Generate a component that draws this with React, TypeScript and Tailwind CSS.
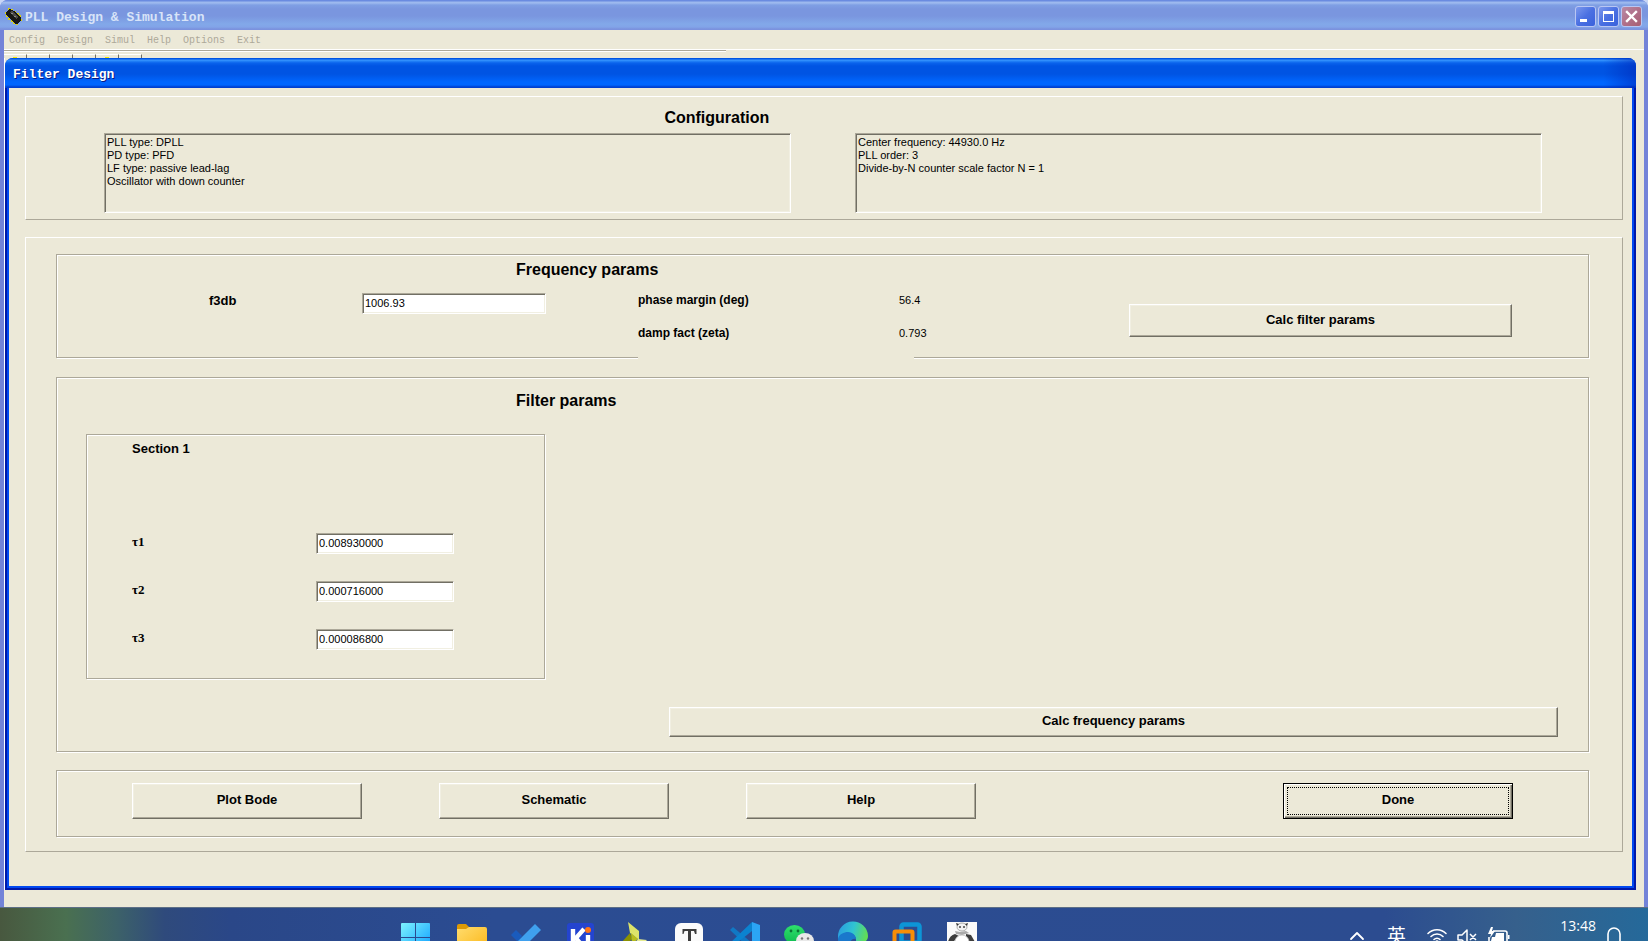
import type { ReactNode } from "react";

const sans = "font-['Liberation_Sans',Arial,sans-serif]";
const mono = "font-['Liberation_Mono','Courier_New',monospace]";

const raisedPanel =
  "border border-t-white border-l-white border-r-[#aca899] border-b-[#aca899]";
const etched =
  "border border-[#aca899] p-px shadow-[1px_1px_0_#fff,inset_1px_1px_0_#fff]";
const sunken =
  "border border-t-[#aca899] border-l-[#aca899] border-r-white border-b-white shadow-[inset_1px_1px_0_#716f64,inset_-1px_-1px_0_#f1efe2]";

function PushButton({ children, className = "" }: { children: ReactNode; className?: string }) {
  return (
    <button
      type="button"
      className={`border border-t-white border-l-white border-r-[#716f64] border-b-[#716f64] bg-[#ece9d8] pb-0.5 text-[13px] leading-5 font-bold shadow-[inset_-1px_-1px_0_#aca899,inset_1px_1px_0_#f1efe2] ${className}`}
    >
      {children}
    </button>
  );
}

function ListBox({ lines, className = "" }: { lines: string[]; className?: string }) {
  return (
    <ul className={`h-20 px-0.5 pt-0.5 text-[11px] leading-[13px] ${sunken} ${className}`}>
      {lines.map((line) => (
        <li key={line}>{line}</li>
      ))}
    </ul>
  );
}

function TextField({ id, value, className = "" }: { id: string; value: string; className?: string }) {
  return (
    <input
      id={id}
      type="text"
      defaultValue={value}
      className={`h-[21px] w-full min-w-0 rounded-none bg-white px-0.5 pb-0.5 text-[11px] leading-4 outline-none ${sunken} ${className}`}
    />
  );
}

function ChipIcon() {
  return (
    <svg width="18" height="18" viewBox="0 0 18 18" shapeRendering="crispEdges" aria-hidden="true">
      <path
        d="M3 0h2v2H3zM6 1h2v2H6zM0 4h2v2H0zM9 3h2v2H9zM12 5h2v2h-2zM14 7h2v2h-2zM1 7h2v2H1zM3 10h2v2H3zM6 12h2v2H6zM8 14h2v2H8zM11 15h2v2h-2zM15 11h2v2h-2z"
        fill="#d8d010"
      />
      <path d="M2 3 5 1l4 2 7 6v3l-4 4h-2L1 7V4z" fill="#161616" />
      <path d="M4 4l3-1 7 6-3 2z" fill="#484848" />
      <path d="M6 5h2v1H6zM9 8h2v1H9z" fill="#8a8a8a" />
    </svg>
  );
}

const captionBase =
  "flex h-[21px] w-[21px] items-center justify-center rounded-[3px] border border-[#b9c6f3]";

function CaptionButtons() {
  return (
    <div className="flex gap-0.5">
      <button type="button" aria-label="Minimize" className={`${captionBase} bg-linear-to-br from-[#7d98ec] via-[#4a70e2] to-[#3a62dc]`}>
        <svg width="19" height="19" viewBox="0 0 19 19" aria-hidden="true">
          <path d="M4 12h7v3H4z" fill="#fff" />
        </svg>
      </button>
      <button type="button" aria-label="Maximize" className={`${captionBase} bg-linear-to-br from-[#7d98ec] via-[#4a70e2] to-[#3a62dc]`}>
        <svg width="19" height="19" viewBox="0 0 19 19" aria-hidden="true">
          <path fillRule="evenodd" d="M4 4h11v11H4zM5 7v7h9V7z" fill="#fff" />
        </svg>
      </button>
      <button type="button" aria-label="Close" className={`${captionBase} bg-linear-to-br from-[#b98aa6] via-[#b0708a] to-[#a85f72]`}>
        <svg width="19" height="19" viewBox="0 0 19 19" aria-hidden="true">
          <path d="M5 5l9 9M14 5l-9 9" stroke="#fff" strokeWidth="2.4" strokeLinecap="square" />
        </svg>
      </button>
    </div>
  );
}

function TaskIcon({ name, children }: { name: string; children: ReactNode }) {
  return (
    <button type="button" aria-label={name} className="h-8 w-8 shrink-0">
      <svg width="32" height="32" viewBox="0 0 32 32" aria-hidden="true">
        {children}
      </svg>
    </button>
  );
}

function TaskbarApps() {
  return (
    <div className="flex w-[578px] justify-between">
      <TaskIcon name="Start">
        <defs>
          <linearGradient id="win" x1="0" y1="0" x2="1" y2="1">
            <stop offset="0" stopColor="#7df3ff" />
            <stop offset="1" stopColor="#0a9bff" />
          </linearGradient>
        </defs>
        <path d="M2 2h13v14H1V3a1 1 0 0 1 1-1zM16 2h13a1 1 0 0 1 1 1v13H16zM1 17h14v14H1zM16 17h14v14H16z" fill="url(#win)" />
      </TaskIcon>
      <TaskIcon name="File Explorer">
        <defs>
          <linearGradient id="fold" x1="0" y1="0" x2="1" y2="1">
            <stop offset="0" stopColor="#ffdc6e" />
            <stop offset="1" stopColor="#fbb616" />
          </linearGradient>
        </defs>
        <path d="M2 5a2 2 0 0 1 2-2h7l3 3v4H2z" fill="#dd9a04" />
        <path d="M2 8h9l3-2h16a2 2 0 0 1 2 2v22H2z" fill="url(#fold)" />
      </TaskIcon>
      <TaskIcon name="To Do">
        <path d="M7 9 13 15 9 21 2 14z" fill="#1a5bbd" />
        <path d="M26 3l6 6L14 27l-6-6z" fill="#3fa0ee" />
      </TaskIcon>
      <TaskIcon name="KiCad">
        <rect x="3" y="2" width="27" height="28" rx="3" fill="#2444cf" />
        <path d="M9 8v20M20 8 12 17l8 10" stroke="#fff" strokeWidth="4.4" fill="none" />
        <path d="M24 14v15" stroke="#fff" strokeWidth="4.4" />
        <circle cx="24" cy="9" r="3" fill="#ff7415" />
      </TaskIcon>
      <TaskIcon name="Design tool">
        <path d="M10 1l11 9v9l-9-7z" fill="#dce36a" />
        <path d="M12 12l2 6-4 4H3z" fill="#8c9200" />
        <path d="M13 12l7 6-6 5z" fill="#b7bd1e" />
        <path d="M20 18l9 1-7 7-6-3z" fill="#e5eb90" />
      </TaskIcon>
      <TaskIcon name="Typora">
        <rect x="2" y="2" width="28" height="29" rx="6" fill="#fbfbfb" />
        <path d="M9.500 8h14v5h-1.500l-1-3H18v16h-3V10h-3.500l-1 3H9.500z" fill="#3d3d3d" />
      </TaskIcon>
      <TaskIcon name="Visual Studio Code">
        <path d="M2 9l3-3 19 16v8z" fill="#1178c4" />
        <path d="M24 1v9L5 25l-3-3z" fill="#0b83d0" />
        <path d="M24 1l8 3v24l-8 3z" fill="#2ba5f5" />
      </TaskIcon>
      <TaskIcon name="WeChat">
        <defs>
          <linearGradient id="wc" x1="0" y1="0" x2="0" y2="1">
            <stop offset="0" stopColor="#2ee06c" />
            <stop offset="1" stopColor="#10bb50" />
          </linearGradient>
        </defs>
        <ellipse cx="12.500" cy="13.500" rx="10.500" ry="9.500" fill="url(#wc)" />
        <circle cx="9" cy="10" r="1.400" fill="#0b7335" />
        <circle cx="16" cy="10" r="1.400" fill="#0b7335" />
        <ellipse cx="23" cy="20" rx="9" ry="8" fill="#e8e8e8" />
        <circle cx="20" cy="17.500" r="1.200" fill="#777" />
        <circle cx="26" cy="17.500" r="1.200" fill="#777" />
      </TaskIcon>
      <TaskIcon name="Edge">
        <defs>
          <linearGradient id="edge" x1="0" y1="0.300" x2="1" y2="0.500">
            <stop offset="0" stopColor="#2a9de0" />
            <stop offset="0.500" stopColor="#30c4d2" />
            <stop offset="1" stopColor="#62df52" />
          </linearGradient>
        </defs>
        <path d="M1 16A15 15 0 0 1 31 15c0 5-4 7-8 7-3 0-4-1-4-3 0-4-3-7-7-7-5 0-9 3-11 7z" fill="url(#edge)" />
        <path d="M1 18c1-5 6-7 10-7 5 0 8 4 8 7-5-1-7 4-6 8v5C6 30 1 25 1 18z" fill="#1a78cc" />
      </TaskIcon>
      <TaskIcon name="VMware">
        <rect x="10.500" y="3.500" width="18" height="18" rx="2" fill="none" stroke="#0d95d6" strokeWidth="4.500" />
        <rect x="3.500" y="10.500" width="18" height="18" rx="1" fill="none" stroke="#f78d06" strokeWidth="4" />
      </TaskIcon>
      <TaskIcon name="PLL Design">
        <path d="M1 1h30v31H1z" fill="#fafafa" />
        <ellipse cx="16" cy="6" rx="5" ry="4" fill="#f2f2f2" stroke="#999" strokeWidth="0.800" />
        <path d="M10 2l3 1-2 2zM19 3l3-1-1 3z" fill="#333" />
        <circle cx="14" cy="6" r="1" fill="#444" />
        <circle cx="18" cy="6" r="1" fill="#444" />
        <path d="M9 10l5 1 6-1 3 2-7 2-6-1z" fill="#aaa" />
        <path d="M9 13l4 2-6 6-5 1c0-4 3-8 7-9zM20 13l5 1 4 7-4 4-5-7z" fill="#3d3d3d" />
        <ellipse cx="16" cy="21" rx="7" ry="7" fill="#fff" stroke="#bbb" strokeWidth="0.800" />
      </TaskIcon>
    </div>
  );
}

function Tray() {
  return (
    <div className="flex items-start text-white">
      <button type="button" aria-label="Show hidden icons" className="mt-1 mr-5 h-5 w-5">
        <svg width="20" height="20" viewBox="0 0 20 20" aria-hidden="true">
          <path d="M4 14l6-6 6 6" fill="none" stroke="#fff" strokeWidth="1.800" strokeLinecap="round" strokeLinejoin="round" />
        </svg>
      </button>
      <span className="mt-1 mr-5 font-['Noto_Sans_CJK_SC',sans-serif] text-[19px] leading-5">英</span>
      <div className="mt-[5px] mr-4 flex gap-2">
        <svg width="22" height="22" viewBox="0 0 22 22" fill="none" stroke="#fff" strokeWidth="1.600" strokeLinecap="round" aria-hidden="true">
          <path d="M2 7.500a12.700 12.700 0 0 1 18 0M5 10.500a8.500 8.500 0 0 1 12 0M8 13.500a4.200 4.200 0 0 1 6 0" />
          <circle cx="11" cy="16" r="1" fill="#fff" />
        </svg>
        <svg width="22" height="22" viewBox="0 0 22 22" fill="none" stroke="#fff" strokeWidth="1.500" strokeLinejoin="round" aria-hidden="true">
          <path d="M2 9h4l5-5v15l-5-5H2zM14 8l6 6M20 8l-6 6" />
        </svg>
        <svg width="24" height="22" viewBox="0 0 24 22" aria-hidden="true">
          <path d="M7 5h12a2 2 0 0 1 2 2v8a2 2 0 0 1-2 2H5a2 2 0 0 1-2-2v-4" fill="none" stroke="#fff" strokeWidth="1.600" />
          <path d="M10 7h8v8H5l1-4h3z" fill="#fff" />
          <path d="M22 9h1.500v4H22zM5 1 2 8h3l-1 4 5-7H6l1-4z" fill="#fff" />
        </svg>
      </div>
      <time className="-mt-[5px] mr-2.5 w-[70px] text-right font-['Open_Sans','Noto_Sans',sans-serif] text-[14px] leading-5">
        13:48
        <br />
        2024/5/26
      </time>
      <svg width="16" height="22" viewBox="0 0 16 22" className="mt-1.5" fill="none" stroke="#fff" strokeWidth="1.600" aria-hidden="true">
        <path d="M2 15V7a6 6 0 0 1 12 0v8l2 2H0z" />
      </svg>
    </div>
  );
}

const menuItems = ["Config", "Design", "Simul", "Help", "Options", "Exit"];

const toolbarButtons = [
  { name: "open", hasLamp: true },
  { name: "save", hasLamp: false },
  { name: "config", hasLamp: false },
  { name: "filter", hasLamp: false },
  { name: "simulate", hasLamp: true },
  { name: "exit", hasLamp: false },
];

const taus = [
  { id: "tau1", label: "τ1", value: "0.008930000" },
  { id: "tau2", label: "τ2", value: "0.000716000" },
  { id: "tau3", label: "τ3", value: "0.000086800" },
];

export default function App() {
  return (
    <div className={`flex min-h-screen flex-col bg-[#c9d6f5] text-black ${sans}`}>
      <div className="overflow-hidden rounded-t-lg bg-[#6f80d8]">
        <header className="flex h-[30px] items-start justify-between bg-[linear-gradient(#6a8be0_0,#6a8be0_1px,#9db9ee_2px,#9db9ee_3px,#7f9fe4_5px,#7a96df_9px,#7a96df_16px,#82a8e9_24px,#82a4e8_27px,#7b92de_29px,#7b92de_30px)] pt-1.5 pr-1.5 pl-[5px]">
          <div className={`flex items-center gap-0.5 text-[13px] leading-5 font-bold text-[#d8e4f8] ${mono}`}>
            <ChipIcon />
            <h1 className="pt-0.5">PLL Design &amp; Simulation</h1>
          </div>
          <CaptionButtons />
        </header>

        <div className="border-x-4 border-r-[#7383d8] border-l-[#7383d8] bg-[#ece9d8] pb-[17px]">
          <nav className={`flex h-5 items-center gap-3 border-b border-white px-[5px] pt-0.5 text-[10px] leading-4 text-[#aca899] ${mono}`}>
            {menuItems.map((item) => (
              <a key={item} href="#">
                {item}
              </a>
            ))}
          </nav>
          <div className="h-0.5 w-[44%] border-b border-white bg-[#aca899]" />
          <div className="flex h-1.5 pt-0.5">
            {toolbarButtons.map((button) => (
              <div key={button.name} className="flex w-[23px] items-end justify-center border-t border-r border-t-white border-r-[#716f64]">
                {button.hasLamp && <span className="h-px w-1 bg-[#f4e800]" />}
              </div>
            ))}
          </div>

          <section className="mr-2 border-l border-white">
            <div className="overflow-hidden rounded-t-lg bg-[#0040e0]">
              <header className="flex h-[30px] items-center bg-[linear-gradient(90deg,transparent_98%,#0020b080_100%),linear-gradient(#0054e3_0,#0054e3_1px,#3c98ff_2px,#2484f8_3px,#0a62ec_5px,#0054e3_8px,#0054e3_16px,#0066ff_24px,#0066ff_27px,#0040d0_29px,#0040d0_30px)] pt-1 pl-2">
                <h2 className={`text-[13px] leading-5 font-bold text-white [text-shadow:1px_1px_0_#0a1883] ${mono}`}>
                  Filter Design
                </h2>
              </header>

              <div className="border-x-2 border-b-2 border-[#0018a8]">
                <div className="border-x-2 border-b-2 border-[#0048f0] bg-[#ece9d8] pt-2 pr-[9px] pb-[34px] pl-4">
                  <div className={`grid grid-cols-[78fr_687fr_64fr_687fr_80fr] pt-[11px] pb-1.5 ${raisedPanel}`}>
                    <h3 className="col-span-5 mb-[5px] pl-[40%] text-[16px] leading-5 font-bold">Configuration</h3>
                    <ListBox
                      className="col-start-2"
                      lines={[
                        "PLL type: DPLL",
                        "PD type: PFD",
                        "LF type: passive lead-lag",
                        "Oscillator with down counter",
                      ]}
                    />
                    <ListBox
                      className="col-start-4"
                      lines={[
                        "Center frequency: 44930.0 Hz",
                        "PLL order: 3",
                        "Divide-by-N counter scale factor N = 1",
                      ]}
                    />
                  </div>

                  <div className={`mt-[17px] pt-4 pr-[33px] pb-3.5 pl-[30px] ${raisedPanel}`}>
                    <div className={etched}>
                      <div className="grid grid-cols-[458fr_1071fr] pt-1">
                        <h3 className="col-start-2 text-[16px] leading-5 font-bold">Frequency params</h3>
                      </div>
                      <div className="grid min-h-[76px] grid-cols-[151fr_153fr_184fr_92fr_276fr_215fr_383fr_75fr]">
                        <label htmlFor="f3db" className="col-start-2 pt-[11px] text-[13px] leading-5 font-bold">
                          f3db
                        </label>
                        <TextField id="f3db" value="1006.93" className="mt-[13px]" />
                        <dl className="col-start-5 -mb-[3px] grid grid-cols-[261fr_15fr] content-start gap-y-[13px] bg-[#ece9d8] pt-2.5 text-[11px] leading-5">
                          <dt className="text-[12px] font-bold">phase margin (deg)</dt>
                          <dd className="w-0">56.4</dd>
                          <dt className="text-[12px] font-bold">damp fact (zeta)</dt>
                          <dd className="w-0">0.793</dd>
                        </dl>
                        <PushButton className="col-start-7 mt-6 h-[33px]">Calc filter params</PushButton>
                      </div>
                    </div>

                    <div className={`mt-[19px] pt-[13px] pb-3.5 ${etched}`}>
                      <div className="grid grid-cols-[458fr_1071fr]">
                        <h3 className="col-start-2 text-[16px] leading-5 font-bold">Filter params</h3>
                      </div>
                      <div className="mt-[23px] grid grid-cols-[28fr_459fr_1042fr]">
                        <fieldset className={`col-start-2 min-w-0 ${etched}`}>
                          <div className="grid grid-cols-[44fr_184fr_138fr_89fr] gap-y-[27px] pt-[3px] pb-[27px]">
                            <h4 className="col-span-2 col-start-2 mb-[47px] text-[13px] leading-5 font-bold">Section 1</h4>
                            {taus.map((tau) => (
                              <div key={tau.id} className="contents">
                                <label
                                  htmlFor={tau.id}
                                  className="col-start-2 font-['Liberation_Serif','Times_New_Roman',serif] text-[13px] leading-[18px] font-bold"
                                >
                                  {tau.label}
                                </label>
                                <TextField id={tau.id} value={tau.value} />
                              </div>
                            ))}
                          </div>
                        </fieldset>
                      </div>
                      <div className="mt-7 grid grid-cols-[611fr_889fr_29fr]">
                        <PushButton className="col-start-2 h-[30px]">Calc frequency params</PushButton>
                      </div>
                    </div>

                    <div className={`mt-[18px] ${etched}`}>
                      <div className="grid grid-cols-[74fr_230fr_77fr_230fr_77fr_230fr_307fr_230fr_74fr] pt-[11px] pb-4">
                        <PushButton className="col-start-2 h-9">Plot Bode</PushButton>
                        <PushButton className="col-start-4 h-9">Schematic</PushButton>
                        <PushButton className="col-start-6 h-9">Help</PushButton>
                        <button
                          type="button"
                          className="col-start-8 h-9 border border-black bg-[#ece9d8] pb-0.5 text-[13px] leading-5 font-bold shadow-[inset_1px_1px_0_#fff,inset_-1px_-1px_0_#716f64,inset_-2px_-2px_0_#aca899] outline-1 -outline-offset-5 outline-black outline-dotted"
                        >
                          Done
                        </button>
                      </div>
                    </div>
                  </div>
                </div>
              </div>
            </div>
          </section>
        </div>
      </div>

      <footer className="flex h-[34px] items-start justify-between overflow-hidden border-t border-[#5d6f86] bg-[linear-gradient(90deg,#48583f_0,#4a7050_4%,#3d6268_7%,#2f4a7c_10%,#2a4788_14%,#2b4c92_30%,#2c4c90_84%,#36608c_92%,#25699a_100%)] pt-[13px] pr-[26px] pl-[400px]">
        <TaskbarApps />
        <Tray />
      </footer>
    </div>
  );
}
